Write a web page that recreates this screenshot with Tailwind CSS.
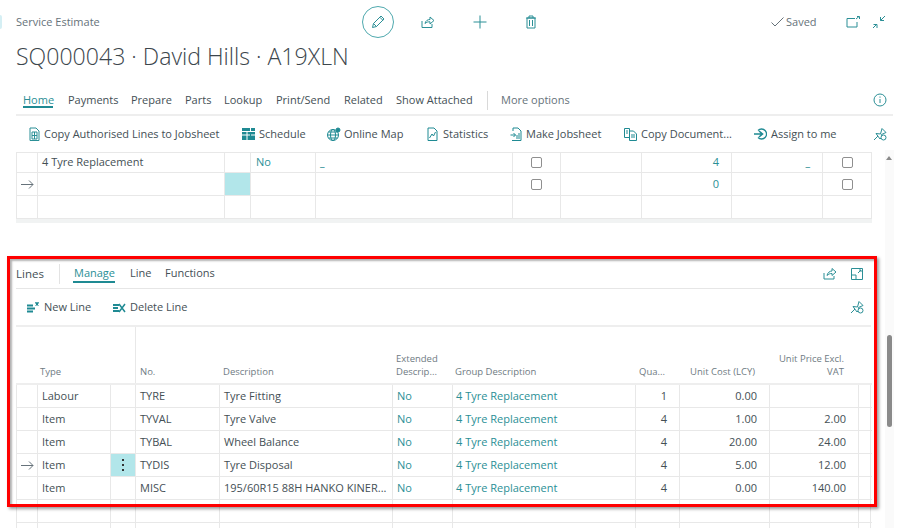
<!DOCTYPE html>
<html lang="en">
<head>
  <meta charset="UTF-8">
  <title>Service Estimate</title>
  <script src="https://cdn.jsdelivr.net/npm/@tailwindcss/browser@4"></script>
</head>
<body class="bg-white">
  <div class="relative w-[900px] h-[528px] overflow-hidden bg-white pl-4 font-['Open_Sans',sans-serif] text-[11px] text-[#444f55]">
    <!-- Page header -->
    <div class="flex items-center h-[44px] w-[877px]">
      <span class="w-[346px] text-[#66727a] text-[11px]">Service Estimate</span>
      <span class="w-[32px] h-[32px] rounded-full border border-[#4fa9ae] flex items-center justify-center">
        <svg width="16" height="16" viewBox="0 0 16 16" fill="none" stroke="#2b8f96"><path d="M2.500 13.500l1-4L11 2l3 3-7.500 7.500z M3.500 9.500l3 3 M9.800 3.200l3 3"/></svg>
      </span>
      <svg class="ml-[27px]" width="14" height="14" viewBox="0 0 14 14" fill="none" stroke="#2b8f96"><path d="M1 6v6.500h10V9 M4 8.500C4.500 5.500 7 4.500 9 4.500V2l4 3.500-4 3.500V6.800C7 6.800 5.500 7 4 8.500z"/></svg>
      <svg class="ml-[38px]" width="14" height="14" viewBox="0 0 14 14" fill="none" stroke="#2b8f96"><path d="M7 0.500v13 M0.500 7h13"/></svg>
      <svg class="ml-[38px]" width="12" height="14" viewBox="0 0 12 14" fill="none" stroke="#2b8f96"><path d="M2 3h8v10H2z M1 3h10 M4 3V1h4v2 M4.500 5v6 M7.500 5v6"/></svg>
      <svg class="ml-[234px]" width="13" height="10" viewBox="0 0 13 10" fill="none" stroke="#66727a"><path d="M0.500 5.500L4 9l8.500-8.500"/></svg>
      <span class="ml-[2px] w-[30px] text-[#66727a] text-[11px]">Saved</span>
      <svg class="ml-[30px]" width="14" height="12" viewBox="0 0 14 12" fill="none" stroke="#2b8f96"><path d="M9 2.500H1v8.500h10V6 M10 3l3-2.500 M11 0.500h2.500V3"/></svg>
      <svg class="ml-[12px]" width="14" height="14" viewBox="0 0 14 14" fill="none" stroke="#2b8f96"><path d="M13 1L8.500 5.500 M8.500 2v3.500H12 M1 13l4-4 M1.500 9.500H5V13"/></svg>
    </div>
    <h1 class="h-[24px] leading-[24px] text-[23.1px] font-light text-[#3c464c] whitespace-nowrap">SQ000043 · David Hills · A19XLN</h1>

    <!-- Tabs -->
    <div class="mt-[18px] flex items-center h-[28px] w-[870px] pl-[7px] border-b-2 border-[#eeeeee] box-content">
      <span class="w-[45px] text-[#2b8f96]">Home</span>
      <span class="w-[63px]">Payments</span>
      <span class="w-[54px]">Prepare</span>
      <span class="w-[39px]">Parts</span>
      <span class="w-[52px]">Lookup</span>
      <span class="w-[68px]">Print/Send</span>
      <span class="w-[52px]">Related</span>
      <span class="w-[91px] whitespace-nowrap">Show Attached</span>
      <span class="w-px h-[19px] bg-[#d9d9d9] mr-[13px]"></span>
      <span class="text-[#66727a]">More options</span>
      <svg class="ml-auto mr-[6px]" width="14" height="14" viewBox="0 0 14 14" fill="none" stroke="#2b8f96"><circle cx="7" cy="7" r="6"/><path d="M7 6v4 M7 3.500v1.200"/></svg>
    </div>
    <span class="absolute left-[23px] top-[106px] w-[30px] h-[2px] bg-[#1f8a93]"></span>

    <!-- Action bar -->
    <div class="flex items-center h-[36px] w-[877px] pl-[13px]">
      <div class="flex items-center gap-[4px] w-[213px]">
        <svg width="11" height="14" viewBox="0 0 11 14" fill="none" stroke="#2b8f96"><path d="M1 1h6l3 3v9.500H1z M3 5h5v7H3z M5.500 5v7 M3 8.500h5"/></svg>
        <span class="whitespace-nowrap">Copy Authorised Lines to Jobsheet</span>
      </div>
      <div class="flex items-center gap-[4px] w-[85px]">
        <svg width="13" height="12" viewBox="0 0 13 12"><path fill="#1f8a93" d="M0 0h13v12H0z"/><path stroke="#fff" d="M0 3.500h13 M0 7h8 M5 3v9 M8.500 0v4 M9 7h4"/></svg>
        <span>Schedule</span>
      </div>
      <div class="flex items-center gap-[3px] w-[100px]">
        <svg width="14" height="14" viewBox="0 0 14 14" fill="none" stroke="#1f8a93"><circle cx="6" cy="8" r="5.500"/><ellipse cx="6" cy="8" rx="2.500" ry="5.500"/><path d="M0.500 8h11 M1.500 5h9 M1.500 11h9"/><circle cx="11" cy="3" r="2" fill="#1f8a93"/></svg>
        <span>Online Map</span>
      </div>
      <div class="flex items-center gap-[5px] w-[83px]">
        <svg width="11" height="14" viewBox="0 0 11 14" fill="none" stroke="#1f8a93"><path d="M1 1h6l3 3v9.500H1z M2.500 11l2.500-4 1.500 2 2-4"/></svg>
        <span>Statistics</span>
      </div>
      <div class="flex items-center gap-[4px] w-[114px]">
        <svg width="12" height="14" viewBox="0 0 12 14" fill="none" stroke="#1f8a93"><path d="M3 4V1h5l3 3v9.500H2 M0.500 8h5 M3.500 6l2 2-2 2 M7 12V8 M9 12V6"/></svg>
        <span>Make Jobsheet</span>
      </div>
      <div class="flex items-center gap-[4px] w-[130px]">
        <svg width="13" height="13" viewBox="0 0 13 13" fill="none" stroke="#1f8a93"><path d="M0.500 0.500h5v9h-5z M5.500 3h4l3 3v6.500h-7z M2 3h2 M2 5h2 M7 7h4 M7 9h4"/></svg>
        <span class="whitespace-nowrap">Copy Document...</span>
      </div>
      <div class="flex items-center gap-[4px]">
        <svg width="13" height="12" viewBox="0 0 13 12" fill="none" stroke="#1f8a93"><path d="M4 2.500A5 5 0 1 1 4 9.500" stroke-width="1.300"/><path d="M0 6h7.500 M5 3l3.500 3L5 9" stroke-width="1.600"/></svg>
        <span class="whitespace-nowrap">Assign to me</span>
      </div>
      <svg class="absolute left-[873px] top-[127px]" width="14" height="14" viewBox="0 0 14 14" fill="none" stroke="#2b8f96"><path d="M1 13l4-4 M3 6.500L7.500 7 9 1.500l4 4-4.500 2L9 10l-2 2z"/><circle cx="10.500" cy="10.500" r="2.500" fill="#fff"/></svg>
    </div>

    <!-- Upper lines table -->
    <div id="upper" class="w-[856px] border-t border-[#e8e8e8] border-b-4 border-b-[#f1f3f3]"></div>

    <!-- Lines part -->
    <div class="mt-[37px] w-[855px]">
      <div class="relative flex items-center h-[29px] pb-[1px] border-b border-[#e6e6e6]">
        <span class="font-medium text-[11.5px] text-[#444f55] w-[43px]">Lines</span>
        <span class="w-px h-[20px] bg-[#e3e3e3] mr-[14px]"></span>
        <span class="w-[56px] text-[#2b8f96]">Manage</span>
        <span class="absolute left-[57px] top-[21px] w-[42px] h-[2px] bg-[#1f8a93]"></span>
        <span class="w-[35px]">Line</span>
        <span>Functions</span>
        <svg class="ml-auto" width="14" height="13" viewBox="0 0 14 13" fill="none" stroke="#2b8f96"><path d="M1 6v6h10V9 M4 8.500C4.500 5.500 7 4 9 4V1.500l4 3.500-4 3.500V6.500C7 6.500 5.500 7 4 8.500z"/></svg>
        <svg class="ml-[14px] mr-[8px]" width="12" height="12" viewBox="0 0 12 12" fill="none" stroke="#2b8f96"><path d="M0.500 0.500h11v11H0.500z M0.500 7h4.500v4.500 M7 5l3-3 M8 2h2v2"/></svg>
      </div>
      <div class="relative flex items-center h-[38px] pt-[1px] border-b-2 border-[#eeeeee] pl-[11px]">
        <div class="flex items-center gap-[4px] w-[86px]">
          <svg width="13" height="12" viewBox="0 0 13 12" fill="none" stroke="#1f8a93"><path d="M0 3.500h6 M0 6.500h8 M0 9.500h6" stroke-width="2"/><path d="M8 1h4 M10 0v4 M8.500 0.500l3 3 M11.500 0.500l-3 3"/></svg>
          <span>New Line</span>
        </div>
        <div class="flex items-center gap-[4px]">
          <svg width="13" height="12" viewBox="0 0 13 12" fill="none" stroke="#1f8a93"><path d="M0 3h6 M0 6h5 M0 9h6" stroke-width="2"/><path d="M6 2l6 8 M12 2l-6 8" stroke-width="1.500"/></svg>
          <span>Delete Line</span>
        </div>
        <svg class="absolute right-[7px] top-[11px]" width="14" height="14" viewBox="0 0 14 14" fill="none" stroke="#2b8f96"><path d="M1 13l4-4 M3 6.500L7.500 7 9 1.500l4 4-4.500 2L9 10l-2 2z"/><circle cx="10.500" cy="10.500" r="2.500" fill="#fff"/></svg>
      </div>
      <div id="lines" class="w-[856px]"></div>
    </div>

    <!-- Scrollbar -->
    <div class="absolute left-[885px] top-[150px] bottom-0 w-[9px] bg-[#fafafa]">
      <span class="absolute left-[1px] top-[6px] w-0 h-0 border-x-[3px] border-x-transparent border-b-[4px] border-b-[#8a8a8a]"></span>
      <span class="absolute left-[2px] top-[185px] w-[5px] h-[92px] rounded-[3px] bg-[#8a8a8a]"></span>
    </div>

    <!-- Highlight frame round the lines part -->
    <div class="absolute left-[7px] top-[256px] w-[870px] h-[251px] border-[3px] border-[#ff0000] shadow-[2px_2px_3px_rgba(0,0,0,0.4),inset_2px_2px_2px_rgba(0,0,0,0.3)]"></div>
    <span class="absolute left-0 top-[15px] w-[2px] h-[14px] rounded-r-full bg-[#d5eff4]"></span>
  </div>

  <script>
    const check = '<span class="block w-[11px] h-[11px] mx-auto rounded-[2px] border border-[#8f8f8f]"></span>';
    const dots = '<span class="flex flex-col items-center gap-[3px]"><i class="w-[2px] h-[2px] bg-[#333]"></i><i class="w-[2px] h-[2px] bg-[#333]"></i><i class="w-[2px] h-[2px] bg-[#333]"></i></span>';
    const arrow = '<svg width="13" height="9" viewBox="0 0 13 9" fill="none" stroke="#66727a"><path d="M0 4.500h12 M8 0.500l4 4-4 4"/></svg>';
    const cell = 'flex items-center h-full min-w-0 border-r border-[#e8e8e8] whitespace-nowrap overflow-hidden';
    const first = 'border-l border-[#e8e8e8] justify-center';
    const selected = 'bg-[#b2e6ea] justify-center';
    const link = 'text-[#2b8f96]';

    // Upper table
    const upperRows = [
      { h: 'h-[20px]', group: '4 Tyre Replacement', ext: 'No', blank: '_', qty: '4', blank2: '_', checks: true },
      { h: 'h-[23px]', cur: true, qty: '0', checks: true },
      { h: 'h-[23px]' }
    ];
    document.getElementById('upper').innerHTML = upperRows.map(r => `
      <div class="grid grid-cols-[22px_187px_26px_65px_197px_48px_81px_90px_91px_49px] ${r.h} border-b border-[#e8e8e8]">
        <div class="${cell} ${first}">${r.cur ? arrow : ''}</div>
        <div class="${cell} pl-[4px]">${r.group || ''}</div>
        <div class="${cell} ${r.cur ? selected : ''}"></div>
        <div class="${cell} pl-[5px] ${link}">${r.ext || ''}</div>
        <div class="${cell} pl-[4px] font-bold ${link}">${r.blank || ''}</div>
        <div class="${cell}">${r.checks ? check : ''}</div>
        <div class="${cell}"></div>
        <div class="${cell} justify-end pr-[12px] ${link}">${r.qty || ''}</div>
        <div class="${cell} justify-end pr-[12px] font-bold ${link}">${r.blank2 || ''}</div>
        <div class="${cell}">${r.checks ? check : ''}</div>
      </div>`).join('');

    // Lines table
    const lineRows = [
      ['Labour', 'TYRE', 'Tyre Fitting', '1', '0.00', ''],
      ['Item', 'TYVAL', 'Tyre Valve', '4', '1.00', '2.00'],
      ['Item', 'TYBAL', 'Wheel Balance', '4', '20.00', '24.00'],
      ['Item', 'TYDIS', 'Tyre Disposal', '4', '5.00', '12.00', true],
      ['Item', 'MISC', '195/60R15 88H HANKO KINER...', '4', '0.00', '140.00']
    ];
    const cols = 'grid grid-cols-[22px_73px_25px_84px_173px_60px_183px_44px_90px_89px_12px]';
    const head = 'text-[9.5px] leading-[13px] text-[#6f7b83]';
    let html = `
      <div class="${cols} h-[58px] border-b-2 border-[#eeeeee] ${head}">
        <div class="col-span-3 flex items-center pl-[24px] pt-[32px] border-r border-[#e8e8e8]">Type</div>
        <div class="flex items-center pl-[4px] pt-[32px]">No.</div>
        <div class="flex items-center pl-[3px] pt-[32px]">Description</div>
        <div class="flex items-center pl-[3px] pt-[19px]">Extended<br>Descrip...</div>
        <div class="flex items-center pl-[2px] pt-[32px]">Group Description</div>
        <div class="flex items-center justify-end pr-[15px] pt-[32px]">Qua...</div>
        <div class="flex items-center justify-end pr-[15px] pt-[32px]">Unit Cost (LCY)</div>
        <div class="flex items-center justify-end text-right pr-[15px] pt-[19px]">Unit Price Excl.<br>VAT</div>
        <div></div>
      </div>`;
    lineRows.concat([[], []]).forEach(r => {
      html += `
      <div class="${cols} h-[23px] border-b border-[#e8e8e8]">
        <div class="${cell} ${first}">${r[6] ? arrow : ''}</div>
        <div class="${cell} pl-[4px]">${r[0] || ''}</div>
        <div class="${cell} ${r[6] ? selected : ''}">${r[6] ? dots : ''}</div>
        <div class="${cell} pl-[4px]">${r[1] || ''}</div>
        <div class="${cell} pl-[4px]">${r[2] || ''}</div>
        <div class="${cell} pl-[4px] ${link}">${r[0] ? 'No' : ''}</div>
        <div class="${cell} pl-[3px] ${link}">${r[0] ? '4 Tyre Replacement' : ''}</div>
        <div class="${cell} justify-end pr-[12px]">${r[3] || ''}</div>
        <div class="${cell} justify-end pr-[12px]">${r[4] || ''}</div>
        <div class="${cell} justify-end pr-[12px]">${r[5] || ''}</div>
        <div class="${cell}"></div>
      </div>`;
    });
    document.getElementById('lines').innerHTML = html;
  </script>
</body>
</html>
